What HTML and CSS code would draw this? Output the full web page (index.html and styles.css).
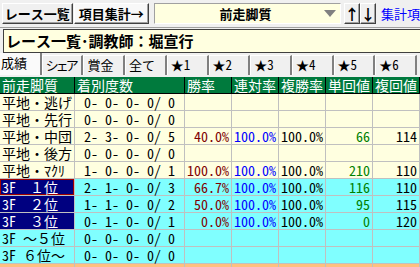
FILE: index.html
```html
<!DOCTYPE html>
<html lang="ja">
    <head>
        <meta charset="UTF-8">
        <title>レース一覧・調教師</title>
        <link rel="stylesheet" href="styles.css">
    </head>
    <body>
        <div class="toolbar">
            <div class="btn btn-list">レース一覧</div>
            <div class="btn btn-sum">項目集計→</div>
            <div class="combo">
                <span class="combo-text">前走脚質</span>
                <span class="combo-arrow"></span>
            </div>
            <div class="btn btn-arrow">↑</div>
            <div class="btn btn-arrow">↓</div>
            <div class="link">集計項</div>
        </div>

        <div class="title">レース一覧･調教師：堀宣行</div>

        <!-- タブ -->
        <div class="tabs">
            <div class="tab active">成績</div>
            <div class="tab narrow">シェア</div>
            <div class="tab">賞金</div>
            <div class="tab">全て</div>
            <div class="tab">★1</div>
            <div class="tab">★2</div>
            <div class="tab">★3</div>
            <div class="tab">★4</div>
            <div class="tab">★5</div>
            <div class="tab">★6</div>
        </div>

        <div class="grid">
            <div class="row head">
                <div class="cell">前走脚質</div>
                <div class="cell">着別度数</div>
                <div class="cell">勝率</div>
                <div class="cell">連対率</div>
                <div class="cell">複勝率</div>
                <div class="cell">単回値</div>
                <div class="cell">複回値</div>
            </div>
            <div class="row yellow">
                <div class="cell">平地・逃げ</div>
                <div class="cell count"> 0- 0- 0- 0/ 0</div>
                <div class="cell"></div><div class="cell"></div><div class="cell"></div><div class="cell"></div><div class="cell"></div>
            </div>
            <div class="row yellow">
                <div class="cell">平地・先行</div>
                <div class="cell count"> 0- 0- 0- 0/ 0</div>
                <div class="cell"></div><div class="cell"></div><div class="cell"></div><div class="cell"></div><div class="cell"></div>
            </div>
            <div class="row yellow">
                <div class="cell">平地・中団</div>
                <div class="cell count"> 2- 3- 0- 0/ 5</div>
                <div class="cell num win">40.0%</div>
                <div class="cell num ren">100.0%</div>
                <div class="cell num">100.0%</div>
                <div class="cell num tan">66</div>
                <div class="cell num">114</div>
            </div>
            <div class="row yellow">
                <div class="cell">平地・後方</div>
                <div class="cell count"> 0- 0- 0- 0/ 0</div>
                <div class="cell"></div><div class="cell"></div><div class="cell"></div><div class="cell"></div><div class="cell"></div>
            </div>
            <div class="row yellow">
                <div class="cell">平地・ﾏｸﾘ</div>
                <div class="cell count"> 1- 0- 0- 0/ 1</div>
                <div class="cell num win">100.0%</div>
                <div class="cell num ren">100.0%</div>
                <div class="cell num">100.0%</div>
                <div class="cell num tan">210</div>
                <div class="cell num">110</div>
            </div>
            <div class="row cyan">
                <div class="cell navy selected">3F　１位</div>
                <div class="cell count"> 2- 1- 0- 0/ 3</div>
                <div class="cell num win">66.7%</div>
                <div class="cell num ren">100.0%</div>
                <div class="cell num">100.0%</div>
                <div class="cell num tan">116</div>
                <div class="cell num">110</div>
            </div>
            <div class="row cyan">
                <div class="cell navy">3F　２位</div>
                <div class="cell count"> 1- 1- 0- 0/ 2</div>
                <div class="cell num win">50.0%</div>
                <div class="cell num ren">100.0%</div>
                <div class="cell num">100.0%</div>
                <div class="cell num tan">95</div>
                <div class="cell num">115</div>
            </div>
            <div class="row cyan">
                <div class="cell navy">3F　３位</div>
                <div class="cell count"> 0- 1- 0- 0/ 1</div>
                <div class="cell num win">0.0%</div>
                <div class="cell num ren">100.0%</div>
                <div class="cell num">100.0%</div>
                <div class="cell num tan">0</div>
                <div class="cell num">120</div>
            </div>
            <div class="row cyan">
                <div class="cell">3F ～５位</div>
                <div class="cell count"> 0- 0- 0- 0/ 0</div>
                <div class="cell"></div><div class="cell"></div><div class="cell"></div><div class="cell"></div><div class="cell"></div>
            </div>
            <div class="row cyan">
                <div class="cell">3F ６位～</div>
                <div class="cell count"> 0- 0- 0- 0/ 0</div>
                <div class="cell"></div><div class="cell"></div><div class="cell"></div><div class="cell"></div><div class="cell"></div>
            </div>
            <div class="row orange">
                <div class="cell"></div><div class="cell"></div><div class="cell"></div><div class="cell"></div><div class="cell"></div><div class="cell"></div><div class="cell"></div>
            </div>
        </div>
    </body>
</html>
```

FILE: styles.css
```css
*{
    margin: 0;
    padding: 0;
    box-sizing: border-box;
}
body{
    width: 420px;
    height: 267px;
    overflow: hidden;
    background-color: #f0f0f0;
    font-family: "Noto Sans Mono CJK JP", "Noto Sans CJK JP", "Liberation Mono", monospace;
    color: #000;
}

/* 上のツールバー */
.toolbar{
    height: 28px;
    display: flex;
    align-items: center;
    padding-left: 2px;
    border-bottom: 1px solid #a0a0a0;
}
.btn{
    height: 21px;
    display: flex;
    align-items: center;
    justify-content: center;
    font-size: 13px;
    font-weight: bold;
    background-color: #f0f0f0;
    border: 1px solid;
    border-color: #fff #404040 #404040 #fff;
    box-shadow: inset -1px -1px #a0a0a0;
}
.btn-list{
    width: 71px;
}
.btn-sum{
    width: 76px;
    margin-left: 1px;
    background-color: #f8f8f8;
}
.combo{
    width: 188px;
    height: 21px;
    margin-left: 5px;
    display: flex;
    align-items: center;
    background-color: #ffffe0;
    border: 1px solid;
    border-color: #a0a0a0 #fff #fff #a0a0a0;
}
.combo-text{
    flex: 1;
    text-align: center;
    font-size: 13px;
    font-weight: bold;
    padding-left: 12px;
}
.combo-arrow{
    width: 0;
    height: 0;
    margin-right: 4px;
    border-left: 6px solid transparent;
    border-right: 6px solid transparent;
    border-top: 7px solid #808080;
}
.btn-arrow{
    width: 16px;
    font-size: 15px;
}
.combo + .btn-arrow{
    margin-left: 3px;
}
.link{
    margin-left: 5px;
    font-size: 13px;
    color: #0000ff;
    white-space: nowrap;
}

/* タイトル */
.title{
    height: 24px;
    margin: 1px -10px 0 3px;
    padding-left: 2px;
    background-color: #ffffe0;
    border: 1px solid #404040;
    font-size: 15px;
    font-weight: bold;
    line-height: 22px;
    white-space: nowrap;
}

/* タブ */
.tabs{
    width: 417px;
    height: 24px;
    display: grid;
    grid-template-columns: repeat(10, 1fr);
    align-items: end;
    padding-bottom: 2px;
}
.tab{
    height: 20px;
    padding-left: 3px;
    font-size: 13px;
    line-height: 18px;
    white-space: nowrap;
    overflow: hidden;
    border-top: 1px solid #fff;
    border-left: 1px solid #fff;
    border-right: 2px solid #808080;
}
.tab.narrow{
    letter-spacing: -3px;
}
.tab.active{
    height: 22px;
    padding-left: 1px;
    font-size: 13px;
    line-height: 20px;
    background-color: #fafafa;
    border-top: none;
    border-left: none;
}

/* 表 */
.grid{
    width: 420px;
}
.row{
    display: grid;
    grid-template-columns: 74px 109px 46px 46px 46px 46px 46px;
    column-gap: 1px;
    width: 420px;
    padding-right: 1px;
    background-color: #c0c0c0;
    border-bottom: 1px solid #c0c0c0;
}
.cell{
    height: 16px;
    padding: 0 2px;
    font-size: 14px;
    line-height: 16px;
    white-space: pre;
}
.head{
    background-color: #000;
    border-bottom-color: #000;
}
.head .cell{
    background-color: #007a3d;
    color: #fff;
}
.yellow .cell{
    background-color: #ffffe0;
}
.cyan .cell{
    background-color: #80ffff;
}
.orange .cell{
    background-color: #ffc080;
}
.cyan .navy{
    background-color: #000080;
    color: #fff;
}
.cyan .selected{
    box-shadow: inset 0 0 0 1px #a00000;
}
.num{
    text-align: right;
}
.win{
    color: #800000;
}
.ren{
    color: #0000ff;
}
.tan{
    color: #008000;
}
```
